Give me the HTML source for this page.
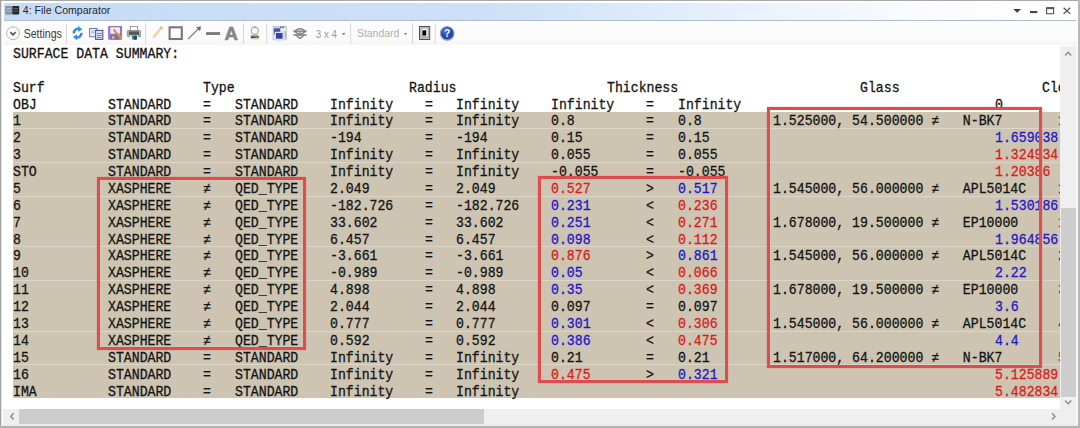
<!DOCTYPE html>
<html><head><meta charset="utf-8"><style>
*{margin:0;padding:0;box-sizing:border-box}
html,body{width:1080px;height:428px;overflow:hidden;background:#fff}
body{position:relative;font-family:"Liberation Sans",sans-serif}
.abs{position:absolute}
#top{left:0;top:0;width:1080px;height:1px;background:#a9a9a9}
#lb{left:0;top:0;width:1px;height:428px;background:#a0a0a0}
#lb2{left:1px;top:1px;width:1px;height:424px;background:#e6e6e8}
#rb{left:1078.2px;top:0;width:1.8px;height:428px;background:#b9b9b9}
#rb2{left:1076px;top:45px;width:2.2px;height:380px;background:#f7f7f7}
#bb{left:0;top:425.9px;width:1080px;height:2.1px;background:#b4b4b4}
#bb2{left:1px;top:423.9px;width:1077px;height:2px;background:#ebedef}
#title{left:4px;top:3px;width:1072px;height:17.5px;background:linear-gradient(to right,#c7dbf4 0%,#cde0f7 45%,#e9f2fc 70%,#f9fbfe 85%,#fff 100%)}
#tline{left:4px;top:20.2px;width:1072px;height:1px;background:#aebdd0}
#tb{left:3px;top:21.2px;width:1074px;height:23.8px;background:linear-gradient(#fdfdfd,#fbfbfb 75%,#f5f5f5)}
#ttext{left:23px;top:3.5px;font-size:12px;color:#1e1e1e;line-height:16px;white-space:nowrap}
.sep{position:absolute;top:23px;width:1px;height:20.5px;background:#d8d8d8}
#txt{left:3px;top:45px;width:1057.5px;height:364px;background:#fff;overflow:hidden}
#beige{left:12.5px;top:66.72px;width:1047.5px;height:286.28px;background:#cdc5b2}
.hl{position:absolute;left:12.5px;width:1047.5px;height:1px;background:#ddd6c7}
.ln{position:absolute;left:0;height:17px;width:1060px;font-family:"Liberation Mono",monospace;-webkit-text-stroke:0.3px currentColor;font-size:14.200px;line-height:17px;white-space:pre}
.ln span{position:absolute;top:0;transform:scaleX(0.9291);transform-origin:0 0}
.k{color:#141414}.b{color:#2216c8}.r{color:#dc1a1a}
#clip{left:0;top:45px;width:1060px;height:363.8px;overflow:hidden}
.box{position:absolute;border:3px solid #e04b4e;box-shadow:0 0 1.3px rgba(215,80,80,0.55),inset 0 0 1.2px rgba(245,235,230,0.6)}
#vs{left:1060px;top:45.5px;width:16px;height:378.5px;background:#efefef}
#vthumb{left:1060.9px;top:207.5px;width:15.2px;height:189.5px;background:#cdcdcd}
#hs{left:3px;top:408.8px;width:1073px;height:15.1px;background:#efefef}
#hthumb{left:19.3px;top:408.8px;width:464.7px;height:15.1px;background:#cdcdcd}
</style></head><body>
<div class="abs" id="title"></div>
<div class="abs" id="tline"></div>
<div class="abs" id="tb"></div>
<svg class="abs" style="left:0;top:0" width="1080" height="46" viewBox="0 0 1080 46">
<!-- title icon -->
<rect x="5.2" y="6" width="7.1" height="8.6" fill="#8593a3"/>
<rect x="6.2" y="8.2" width="5" height="1" fill="#b9c4d0"/>
<rect x="6.2" y="10.6" width="5" height="1" fill="#b9c4d0"/>
<rect x="12.3" y="6" width="6.9" height="8.6" rx="0.8" fill="#23272c"/>
<rect x="13.4" y="8.2" width="4.7" height="0.9" fill="#6d737a"/>
<rect x="13.4" y="10.6" width="4.7" height="0.9" fill="#6d737a"/>
<text x="22.8" y="14.3" font-family="Liberation Sans" font-size="11.6" fill="#1f2530" textLength="87.5" lengthAdjust="spacingAndGlyphs">4: File Comparator</text>
<!-- window buttons -->
<polygon points="1013.3,8.9 1021,8.9 1017.15,12.8" fill="#3a3a3a"/>
<rect x="1030" y="11" width="7.3" height="2.1" fill="#474747"/>
<rect x="1046.6" y="7.9" width="7" height="5.8" fill="none" stroke="#555" stroke-width="1.1"/>
<rect x="1046.1" y="7.2" width="8" height="1.9" fill="#555"/>
<path d="M1063.6 7.7 L1070.2 13.9 M1070.2 7.7 L1063.6 13.9" stroke="#555" stroke-width="1.3" fill="none"/>
<!-- settings -->
<circle cx="13" cy="33.2" r="6.4" fill="none" stroke="#b4b4b4" stroke-width="1"/>
<polyline points="10.3,32.1 13,34.8 15.7,32.1" fill="none" stroke="#555" stroke-width="1.6"/>
<text x="23.7" y="37.6" font-family="Liberation Sans" font-size="12" fill="#3a3a3a" textLength="38.2" lengthAdjust="spacingAndGlyphs">Settings</text>
<!-- separators -->
<g fill="#d6d6d6">
<rect x="66" y="23.2" width="1" height="20.4"/>
<rect x="145.2" y="23.2" width="1" height="20.4"/>
<rect x="243" y="23.2" width="1" height="20.4"/>
<rect x="266.2" y="23.2" width="1" height="20.4"/>
<rect x="350.1" y="23.2" width="1" height="20.4"/>
<rect x="412" y="23.2" width="1" height="20.4"/>
<rect x="434.7" y="23.2" width="1" height="20.4"/>
</g>
<!-- refresh -->
<defs>
<linearGradient id="rg1" x1="0" y1="1" x2="1" y2="0"><stop offset="0" stop-color="#587a94"/><stop offset="0.45" stop-color="#3a8ccc"/><stop offset="1" stop-color="#2296e4"/></linearGradient>
<linearGradient id="rg2" x1="1" y1="0" x2="0" y2="1"><stop offset="0" stop-color="#587a94"/><stop offset="0.45" stop-color="#3a8ccc"/><stop offset="1" stop-color="#2296e4"/></linearGradient>
</defs>
<path d="M73.9 33.4 C73.6 30.2 76.2 28.4 79.6 28.9" fill="none" stroke="url(#rg1)" stroke-width="2.5"/>
<polygon points="78.2,25.9 82.3,29.2 78.3,32" fill="#2a94e0"/>
<path d="M81.4 32.8 C81.7 36 79.1 37.8 75.7 37.3" fill="none" stroke="url(#rg2)" stroke-width="2.5"/>
<polygon points="77.1,34.2 73,37 77,40.2" fill="#2a94e0"/>
<!-- copy -->
<rect x="89.6" y="28.5" width="7.4" height="8.2" fill="#eef2fb" stroke="#6a77b0" stroke-width="1"/>
<rect x="91" y="30.6" width="4.5" height="0.8" fill="#9aa6d0"/>
<rect x="91" y="32.4" width="4.5" height="0.8" fill="#9aa6d0"/>
<rect x="95.6" y="30.4" width="7.2" height="9" fill="#dde4f5" stroke="#4b59a2" stroke-width="1.1"/>
<rect x="97" y="33" width="4.6" height="0.9" fill="#6a78b8"/>
<rect x="97" y="35" width="4.6" height="0.9" fill="#6a78b8"/>
<rect x="97" y="37" width="4.6" height="0.9" fill="#6a78b8"/>
<!-- save -->
<rect x="108.1" y="26.1" width="14" height="13.6" rx="0.8" fill="#9474cc"/>
<rect x="110.3" y="27.3" width="9.6" height="6.3" fill="#f5f1fb"/>
<rect x="110.8" y="35.2" width="8.6" height="4.4" fill="#7d6fa0"/><rect x="112" y="36" width="2.4" height="3.2" fill="#b8b0cc"/>
<path d="M113.6 29.4 L121.4 39.2" stroke="#c98a40" stroke-width="2.2"/><path d="M114.2 29 L121.6 38.2" stroke="#eab860" stroke-width="0.8"/>
<!-- printer -->
<rect x="130.3" y="26.4" width="7.2" height="4.4" fill="#fff" stroke="#8e8e8e" stroke-width="0.9"/>
<rect x="126.8" y="30" width="14.3" height="7.2" rx="1.6" fill="#979797"/>
<rect x="128.6" y="31.5" width="10.8" height="3.4" fill="#5a5a5a"/>
<rect x="127.6" y="31" width="1.2" height="4.6" fill="#b4b4b4"/>
<rect x="139.2" y="31" width="1.2" height="4.6" fill="#b4b4b4"/>
<rect x="129.6" y="35.2" width="8.6" height="5" fill="#eef6f8"/>
<path d="M131.5 35.6 L137 35.6 L136.4 39.8 L132.6 39.8 Z" fill="#2f7f8f"/>
<rect x="134.4" y="35.8" width="2.4" height="3.8" fill="#0d4d5e"/>
<!-- pencil faded -->
<path d="M154.2 36.4 L161.2 27.8" stroke="#f2d79a" stroke-width="2.6"/><path d="M152.9 37.6 L154.6 35.9" stroke="#e8d2a8" stroke-width="1.6"/>
<path d="M160.5 27.1 L162.4 28.6" stroke="#eca8a4" stroke-width="2.2"/>
<!-- square -->
<rect x="169.6" y="27.3" width="12.2" height="11.7" fill="none" stroke="#777" stroke-width="2.1"/>
<!-- arrow -->
<path d="M188 39.2 L198.4 28.8" stroke="#707070" stroke-width="1.2"/>
<polygon points="201,26.3 196,27.2 200.1,31.3" fill="#707070"/>
<!-- dash -->
<rect x="206.1" y="32.1" width="14" height="2.9" fill="#7a7a7a"/>
<!-- A -->
<text x="224.5" y="39.5" font-family="Liberation Sans" font-weight="bold" font-size="18.6" fill="#858585" stroke="#858585" stroke-width="0.6">A</text>
<!-- bulb -->
<circle cx="254.8" cy="30.7" r="3.6" fill="#f6f6f6" stroke="#a4a4a4" stroke-width="1.1"/>
<rect x="253.6" y="26.2" width="2.4" height="1" fill="#aaa"/>
<rect x="250.8" y="35.3" width="7.9" height="1.5" fill="#8a8450"/>
<rect x="250.8" y="36.6" width="7.9" height="1.5" fill="#3c4424"/>
<rect x="255" y="36" width="3.7" height="1.8" fill="#6e9a3c"/>
<rect x="250.8" y="38.1" width="7.9" height="1.5" fill="#c9d6dc"/>
<!-- windows -->
<rect x="273" y="26.2" width="13.6" height="13.6" fill="#eceef2" stroke="#b8bcc6" stroke-width="0.7"/>
<rect x="273" y="26.2" width="13.6" height="2" fill="#c9ccd4"/>
<rect x="280.2" y="26.6" width="1.3" height="1.2" fill="#333"/>
<rect x="282.4" y="26.6" width="1.3" height="1.2" fill="#333"/>
<rect x="273.8" y="28.3" width="6.5" height="6.2" fill="#4450a8"/>
<rect x="275" y="32" width="9" height="8" fill="#e6e9fa" stroke="#c2c6e6" stroke-width="0.6"/>
<rect x="276" y="33" width="6.6" height="5.7" fill="#3441a6"/>
<rect x="284.6" y="31" width="1.6" height="7.5" fill="#b9bcc2"/>
<!-- layers -->
<g fill="none" stroke="#858585" stroke-width="1.5" stroke-linejoin="round">
<path d="M295.2 30.8 Q300 26.8 304.8 30.8"/>
<path d="M293.4 31.2 L306.6 31.2"/>
<path d="M293.4 35 L306.6 35"/>
<path d="M294 31.2 L300 35 L306 31.2"/>
<path d="M295.5 35 L300 38.4 L304.5 35"/>
</g>
<circle cx="300" cy="33" r="1.2" fill="#9a9a9a"/>
<!-- 3x4 -->
<text x="315.8" y="37.5" font-family="Liberation Sans" font-size="11.8" fill="#9b9b9b" textLength="21.2" lengthAdjust="spacingAndGlyphs">3 x 4</text>
<polygon points="341.8,33 345.5,33 343.65,35.3" fill="#7a7a7a"/>
<text x="357" y="37.1" font-family="Liberation Sans" font-size="11.8" fill="#aeaeae" textLength="42.2" lengthAdjust="spacingAndGlyphs">Standard</text>
<polygon points="403.8,33 407.4,33 405.6,35.3" fill="#8a8a8a"/>
<!-- box icon -->
<rect x="419.5" y="26.5" width="10.2" height="13" fill="#dcdcdc" stroke="#4e4e4e" stroke-width="1"/>
<rect x="421" y="28" width="7.2" height="10" fill="#f2f2f2" stroke="#8c8c8c" stroke-width="0.8"/>
<rect x="422.4" y="30.4" width="3.8" height="5.2" fill="#000"/>
<rect x="421.5" y="36.6" width="6.2" height="0.8" fill="#777"/>
<!-- help -->
<circle cx="447.2" cy="33.4" r="6.8" fill="#2447ac" stroke="#9aa4bf" stroke-width="1.2"/>
<circle cx="445.5" cy="31.3" r="3.5" fill="#4f78d6" opacity="0.6"/>
<text x="444" y="37.4" font-family="Liberation Sans" font-weight="bold" font-size="10.5" fill="#fff">?</text>
</svg>

<div class="abs" id="vs"></div>
<div class="abs" id="vthumb"></div>
<div class="abs" id="hs"></div>
<div class="abs" id="hthumb"></div>
<div class="abs" id="clip">
<div class="abs" id="beige"></div>
<div class="hl" style="top:83.02px"></div>
<div class="hl" style="top:116.78px"></div>
<div class="hl" style="top:150.54px"></div>
<div class="hl" style="top:201.18px"></div>
<div class="hl" style="top:234.94px"></div>
<div class="hl" style="top:285.58px"></div>
<div class="hl" style="top:319.34px"></div>
<div style="position:absolute;left:0;top:-45px;width:1060px;height:428px">
<div class="ln" style="top:45.90px"><span class="k" style="left:12.90px">SURFACE DATA SUMMARY:</span></div>
<div class="ln" style="top:79.66px"><span class="k" style="left:12.90px">Surf</span><span class="k" style="left:202.91px">Type</span><span class="k" style="left:408.75px">Radius</span><span class="k" style="left:606.67px">Thickness</span><span class="k" style="left:860.02px">Glass</span><span class="k" style="left:1042.11px">Cle</span></div>
<div class="ln" style="top:96.54px"><span class="k" style="left:12.90px">OBJ</span><span class="k" style="left:107.90px">STANDARD</span><span class="k" style="left:202.91px">=</span><span class="k" style="left:234.58px">STANDARD</span><span class="k" style="left:329.58px">Infinity</span><span class="k" style="left:424.58px">=</span><span class="k" style="left:456.25px">Infinity</span><span class="k" style="left:551.26px">Infinity</span><span class="k" style="left:646.26px">=</span><span class="k" style="left:677.93px">Infinity</span><span class="k" style="left:994.61px">0</span></div>
<div class="ln" style="top:113.42px"><span class="k" style="left:12.90px">1</span><span class="k" style="left:107.90px">STANDARD</span><span class="k" style="left:202.91px">=</span><span class="k" style="left:234.58px">STANDARD</span><span class="k" style="left:329.58px">Infinity</span><span class="k" style="left:424.58px">=</span><span class="k" style="left:456.25px">Infinity</span><span class="k" style="left:551.26px">0.8</span><span class="k" style="left:646.26px">=</span><span class="k" style="left:677.93px">0.8</span><span class="k" style="left:772.93px">1.525000, 54.500000 ≠   N-BK7</span><span class="r" style="left:1057.94px">1</span></div>
<div class="ln" style="top:130.30px"><span class="k" style="left:12.90px">2</span><span class="k" style="left:107.90px">STANDARD</span><span class="k" style="left:202.91px">=</span><span class="k" style="left:234.58px">STANDARD</span><span class="k" style="left:329.58px">-194</span><span class="k" style="left:424.58px">=</span><span class="k" style="left:456.25px">-194</span><span class="k" style="left:551.26px">0.15</span><span class="k" style="left:646.26px">=</span><span class="k" style="left:677.93px">0.15</span><span class="b" style="left:994.61px">1.659038</span></div>
<div class="ln" style="top:147.18px"><span class="k" style="left:12.90px">3</span><span class="k" style="left:107.90px">STANDARD</span><span class="k" style="left:202.91px">=</span><span class="k" style="left:234.58px">STANDARD</span><span class="k" style="left:329.58px">Infinity</span><span class="k" style="left:424.58px">=</span><span class="k" style="left:456.25px">Infinity</span><span class="k" style="left:551.26px">0.055</span><span class="k" style="left:646.26px">=</span><span class="k" style="left:677.93px">0.055</span><span class="r" style="left:994.61px">1.324934</span></div>
<div class="ln" style="top:164.06px"><span class="k" style="left:12.90px">STO</span><span class="k" style="left:107.90px">STANDARD</span><span class="k" style="left:202.91px">=</span><span class="k" style="left:234.58px">STANDARD</span><span class="k" style="left:329.58px">Infinity</span><span class="k" style="left:424.58px">=</span><span class="k" style="left:456.25px">Infinity</span><span class="k" style="left:551.26px">-0.055</span><span class="k" style="left:646.26px">=</span><span class="k" style="left:677.93px">-0.055</span><span class="r" style="left:994.61px">1.20386</span></div>
<div class="ln" style="top:180.94px"><span class="k" style="left:12.90px">5</span><span class="k" style="left:107.90px">XASPHERE</span><span class="k" style="left:202.91px">≠</span><span class="k" style="left:234.58px">QED_TYPE</span><span class="k" style="left:329.58px">2.049</span><span class="k" style="left:424.58px">=</span><span class="k" style="left:456.25px">2.049</span><span class="r" style="left:551.26px">0.527</span><span class="k" style="left:646.26px">&gt;</span><span class="b" style="left:677.93px">0.517</span><span class="k" style="left:772.93px">1.545000, 56.000000 ≠   APL5014C</span><span class="b" style="left:1057.94px">1</span></div>
<div class="ln" style="top:197.82px"><span class="k" style="left:12.90px">6</span><span class="k" style="left:107.90px">XASPHERE</span><span class="k" style="left:202.91px">≠</span><span class="k" style="left:234.58px">QED_TYPE</span><span class="k" style="left:329.58px">-182.726</span><span class="k" style="left:424.58px">=</span><span class="k" style="left:456.25px">-182.726</span><span class="b" style="left:551.26px">0.231</span><span class="k" style="left:646.26px">&lt;</span><span class="r" style="left:677.93px">0.236</span><span class="b" style="left:994.61px">1.530186</span></div>
<div class="ln" style="top:214.70px"><span class="k" style="left:12.90px">7</span><span class="k" style="left:107.90px">XASPHERE</span><span class="k" style="left:202.91px">≠</span><span class="k" style="left:234.58px">QED_TYPE</span><span class="k" style="left:329.58px">33.602</span><span class="k" style="left:424.58px">=</span><span class="k" style="left:456.25px">33.602</span><span class="b" style="left:551.26px">0.251</span><span class="k" style="left:646.26px">&lt;</span><span class="r" style="left:677.93px">0.271</span><span class="k" style="left:772.93px">1.678000, 19.500000 ≠   EP10000</span><span class="r" style="left:1057.94px">1</span></div>
<div class="ln" style="top:231.58px"><span class="k" style="left:12.90px">8</span><span class="k" style="left:107.90px">XASPHERE</span><span class="k" style="left:202.91px">≠</span><span class="k" style="left:234.58px">QED_TYPE</span><span class="k" style="left:329.58px">6.457</span><span class="k" style="left:424.58px">=</span><span class="k" style="left:456.25px">6.457</span><span class="b" style="left:551.26px">0.098</span><span class="k" style="left:646.26px">&lt;</span><span class="r" style="left:677.93px">0.112</span><span class="b" style="left:994.61px">1.964856</span></div>
<div class="ln" style="top:248.46px"><span class="k" style="left:12.90px">9</span><span class="k" style="left:107.90px">XASPHERE</span><span class="k" style="left:202.91px">≠</span><span class="k" style="left:234.58px">QED_TYPE</span><span class="k" style="left:329.58px">-3.661</span><span class="k" style="left:424.58px">=</span><span class="k" style="left:456.25px">-3.661</span><span class="r" style="left:551.26px">0.876</span><span class="k" style="left:646.26px">&gt;</span><span class="b" style="left:677.93px">0.861</span><span class="k" style="left:772.93px">1.545000, 56.000000 ≠   APL5014C</span><span class="b" style="left:1057.94px">2</span></div>
<div class="ln" style="top:265.34px"><span class="k" style="left:12.90px">10</span><span class="k" style="left:107.90px">XASPHERE</span><span class="k" style="left:202.91px">≠</span><span class="k" style="left:234.58px">QED_TYPE</span><span class="k" style="left:329.58px">-0.989</span><span class="k" style="left:424.58px">=</span><span class="k" style="left:456.25px">-0.989</span><span class="b" style="left:551.26px">0.05</span><span class="k" style="left:646.26px">&lt;</span><span class="r" style="left:677.93px">0.066</span><span class="b" style="left:994.61px">2.22</span></div>
<div class="ln" style="top:282.22px"><span class="k" style="left:12.90px">11</span><span class="k" style="left:107.90px">XASPHERE</span><span class="k" style="left:202.91px">≠</span><span class="k" style="left:234.58px">QED_TYPE</span><span class="k" style="left:329.58px">4.898</span><span class="k" style="left:424.58px">=</span><span class="k" style="left:456.25px">4.898</span><span class="b" style="left:551.26px">0.35</span><span class="k" style="left:646.26px">&lt;</span><span class="r" style="left:677.93px">0.369</span><span class="k" style="left:772.93px">1.678000, 19.500000 ≠   EP10000</span><span class="r" style="left:1057.94px">3</span></div>
<div class="ln" style="top:299.10px"><span class="k" style="left:12.90px">12</span><span class="k" style="left:107.90px">XASPHERE</span><span class="k" style="left:202.91px">≠</span><span class="k" style="left:234.58px">QED_TYPE</span><span class="k" style="left:329.58px">2.044</span><span class="k" style="left:424.58px">=</span><span class="k" style="left:456.25px">2.044</span><span class="k" style="left:551.26px">0.097</span><span class="k" style="left:646.26px">=</span><span class="k" style="left:677.93px">0.097</span><span class="b" style="left:994.61px">3.6</span></div>
<div class="ln" style="top:315.98px"><span class="k" style="left:12.90px">13</span><span class="k" style="left:107.90px">XASPHERE</span><span class="k" style="left:202.91px">≠</span><span class="k" style="left:234.58px">QED_TYPE</span><span class="k" style="left:329.58px">0.777</span><span class="k" style="left:424.58px">=</span><span class="k" style="left:456.25px">0.777</span><span class="b" style="left:551.26px">0.301</span><span class="k" style="left:646.26px">&lt;</span><span class="r" style="left:677.93px">0.306</span><span class="k" style="left:772.93px">1.545000, 56.000000 ≠   APL5014C</span><span class="r" style="left:1057.94px">4</span></div>
<div class="ln" style="top:332.86px"><span class="k" style="left:12.90px">14</span><span class="k" style="left:107.90px">XASPHERE</span><span class="k" style="left:202.91px">≠</span><span class="k" style="left:234.58px">QED_TYPE</span><span class="k" style="left:329.58px">0.592</span><span class="k" style="left:424.58px">=</span><span class="k" style="left:456.25px">0.592</span><span class="b" style="left:551.26px">0.386</span><span class="k" style="left:646.26px">&lt;</span><span class="r" style="left:677.93px">0.475</span><span class="b" style="left:994.61px">4.4</span></div>
<div class="ln" style="top:349.74px"><span class="k" style="left:12.90px">15</span><span class="k" style="left:107.90px">STANDARD</span><span class="k" style="left:202.91px">=</span><span class="k" style="left:234.58px">STANDARD</span><span class="k" style="left:329.58px">Infinity</span><span class="k" style="left:424.58px">=</span><span class="k" style="left:456.25px">Infinity</span><span class="k" style="left:551.26px">0.21</span><span class="k" style="left:646.26px">=</span><span class="k" style="left:677.93px">0.21</span><span class="k" style="left:772.93px">1.517000, 64.200000 ≠   N-BK7</span><span class="r" style="left:1057.94px">5</span></div>
<div class="ln" style="top:366.62px"><span class="k" style="left:12.90px">16</span><span class="k" style="left:107.90px">STANDARD</span><span class="k" style="left:202.91px">=</span><span class="k" style="left:234.58px">STANDARD</span><span class="k" style="left:329.58px">Infinity</span><span class="k" style="left:424.58px">=</span><span class="k" style="left:456.25px">Infinity</span><span class="r" style="left:551.26px">0.475</span><span class="k" style="left:646.26px">&gt;</span><span class="b" style="left:677.93px">0.321</span><span class="r" style="left:994.61px">5.125889</span></div>
<div class="ln" style="top:383.50px"><span class="k" style="left:12.90px">IMA</span><span class="k" style="left:107.90px">STANDARD</span><span class="k" style="left:202.91px">=</span><span class="k" style="left:234.58px">STANDARD</span><span class="k" style="left:329.58px">Infinity</span><span class="k" style="left:424.58px">=</span><span class="k" style="left:456.25px">Infinity</span><span class="r" style="left:994.61px">5.482834</span></div>
</div>
</div>
<div class="box" style="left:97px;top:177px;width:208.5px;height:173px"></div>
<div class="box" style="left:538px;top:176px;width:190px;height:207px"></div>
<div class="box" style="left:766.5px;top:106.5px;width:275.5px;height:261px"></div>
<div class="abs" id="top"></div>
<div class="abs" id="lb"></div>
<div class="abs" id="lb2"></div>
<div class="abs" id="rb2"></div>
<div class="abs" id="rb"></div>
<div class="abs" id="bb2"></div>
<div class="abs" id="bb"></div>
<svg class="abs" style="left:0;top:0" width="1080" height="428"><g fill="none" stroke="#8a8a8a" stroke-width="1.4"><polyline points="1065.1,55.4 1068.1,52.3 1071.2,55.4"/><polyline points="1065.1,400.6 1068.2,403.7 1071.3,400.6"/><polyline points="13.7,413.3 10.7,416.4 13.7,419.5"/><polyline points="1052,413.3 1055,416.4 1052,419.5"/></g></svg>
</body></html>
